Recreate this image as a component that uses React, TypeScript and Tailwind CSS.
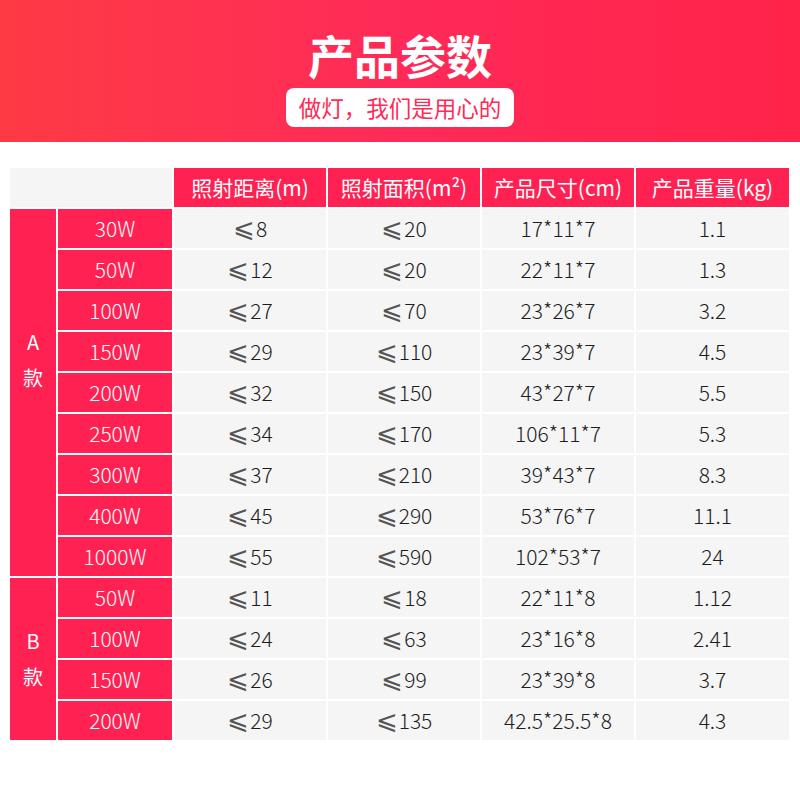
const HEAD = ['照射距离(m)', '照射面积(m²)', '产品尺寸(cm)', '产品重量(kg)'];

type Row = [string, string, string, string, string];

const GROUPS: { label: string; rows: Row[] }[] = [
  {
    label: 'A',
    rows: [
      ['30W', '8', '20', '17*11*7', '1.1'],
      ['50W', '12', '20', '22*11*7', '1.3'],
      ['100W', '27', '70', '23*26*7', '3.2'],
      ['150W', '29', '110', '23*39*7', '4.5'],
      ['200W', '32', '150', '43*27*7', '5.5'],
      ['250W', '34', '170', '106*11*7', '5.3'],
      ['300W', '37', '210', '39*43*7', '8.3'],
      ['400W', '45', '290', '53*76*7', '11.1'],
      ['1000W', '55', '590', '102*53*7', '24'],
    ],
  },
  {
    label: 'B',
    rows: [
      ['50W', '11', '18', '22*11*8', '1.12'],
      ['100W', '24', '63', '23*16*8', '2.41'],
      ['150W', '26', '99', '23*39*8', '3.7'],
      ['200W', '29', '135', '42.5*25.5*8', '4.3'],
    ],
  },
];

const FONT = { fontFamily: '"Noto Sans CJK SC", "Noto Sans", sans-serif' };

// slanted "less or equal" sign, thinner than the digits' font gives
function Le({ v }: { v: string }) {
  return (
    <span className="flex items-baseline">
      <span className="text-[26px] leading-none font-['DejaVu_Sans_ExtraLight','DejaVu_Sans',sans-serif] font-extralight text-[#555] mr-[1px]">⩽</span>
      <span>{v}</span>
    </span>
  );
}

export default function App() {
  return (
    <div className="w-[800px] h-[800px] bg-white overflow-hidden" style={FONT}>
      {/* banner */}
      <div className="h-[142px] bg-linear-to-r from-[#fe3a44] via-[#ff2a58] to-[#ff2349] flex flex-col items-center pt-[22px]">
        <h1 className="text-[46px] leading-[64px] font-bold text-white">产品参数</h1>
        <div className="mt-[2px] h-[39px] px-[13px] rounded-[8px] bg-white flex items-center text-[22.5px] text-[#ff2a55]">
          做灯，我们是用心的
        </div>
      </div>

      {/* table */}
      <div className="mt-[26px] ml-[10px] grid grid-cols-[46px_114px_152px_152px_152px_153px] auto-rows-[39px] gap-[2px] text-[21px]">
        <div className="col-span-2 bg-[#f5f5f5]" />
        {HEAD.map((h) => (
          <div key={h} className="bg-[#ff2152] text-white flex items-center justify-center">
            {h}
          </div>
        ))}

        {GROUPS.map((g) =>
          g.rows.map((r, i) => (
            <>
              {i === 0 && (
                <div
                  key={g.label}
                  className={`${g.label === 'A' ? 'row-span-9 pb-[66px]' : 'row-span-4'} bg-[#ff2152] text-white flex flex-col items-center justify-center leading-[36px] text-[20px]`}
                >
                  <span>{g.label}</span>
                  <span>款</span>
                </div>
              )}
              <div className="bg-[#ff2152] text-white font-light flex items-center justify-center">{r[0]}</div>
              <div className="bg-[#f5f5f5] text-[#1c1c1c] font-light flex items-center justify-center">
                <Le v={r[1]} />
              </div>
              <div className="bg-[#f5f5f5] text-[#1c1c1c] font-light flex items-center justify-center">
                <Le v={r[2]} />
              </div>
              <div className="bg-[#f5f5f5] text-[#1c1c1c] font-light flex items-center justify-center">{r[3]}</div>
              <div className="bg-[#f5f5f5] text-[#1c1c1c] font-light flex items-center justify-center">{r[4]}</div>
            </>
          ))
        )}
      </div>
    </div>
  );
}
